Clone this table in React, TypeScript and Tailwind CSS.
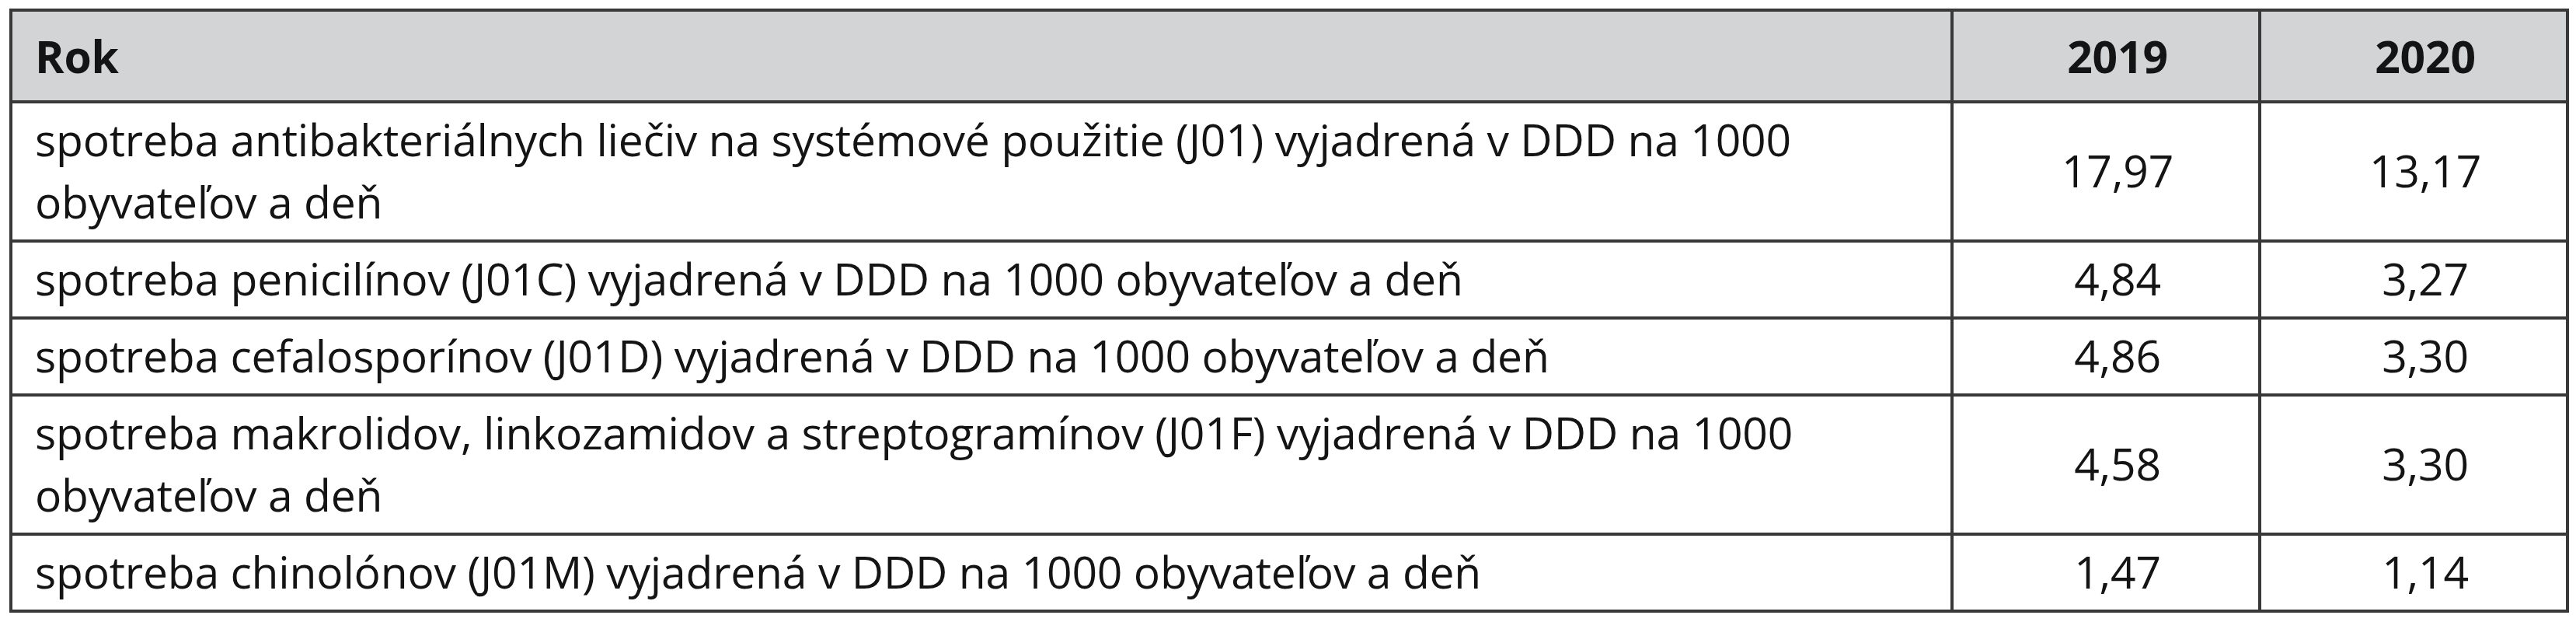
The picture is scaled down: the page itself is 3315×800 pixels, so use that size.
const rows = [
  {
    label: "spotreba antibakteriálnych liečiv na systémové použitie (J01) vyjadrená v DDD na 1000 obyvateľov a deň",
    y2019: "17,97",
    y2020: "13,17",
  },
  {
    label: "spotreba penicilínov (J01C) vyjadrená v DDD na 1000 obyvateľov a deň",
    y2019: "4,84",
    y2020: "3,27",
  },
  {
    label: "spotreba cefalosporínov (J01D) vyjadrená v DDD na 1000 obyvateľov a deň",
    y2019: "4,86",
    y2020: "3,30",
  },
  {
    label: "spotreba makrolidov, linkozamidov a streptogramínov (J01F) vyjadrená v DDD na 1000 obyvateľov a deň",
    y2019: "4,58",
    y2020: "3,30",
  },
  {
    label: "spotreba chinolónov (J01M) vyjadrená v DDD na 1000 obyvateľov a deň",
    y2019: "1,47",
    y2020: "1,14",
  },
];

export default function App() {
  return (
    <div className="min-h-[800px] w-[3315px] bg-white pl-[12px] pt-[11px] font-['Open_Sans',sans-serif] text-[57px] leading-[80px] tracking-[-0.2px] text-[#141414]">
      <table className="w-[3294px] table-fixed border-separate border-spacing-0 border-l-4 border-t-4 border-[#383838]">
        <colgroup>
          <col className="w-[2498px]" />
          <col className="w-[396px]" />
          <col className="w-[396px]" />
        </colgroup>
        <thead>
          <tr className="bg-[#d3d4d6]">
            <th className="border-b-4 border-r-4 border-[#383838] py-[17px] pl-[29px] text-left font-bold">Rok</th>
            <th className="border-b-4 border-r-4 border-[#383838] py-[17px] pl-[30px] text-center font-bold">2019</th>
            <th className="border-b-4 border-r-4 border-[#383838] py-[17px] pl-[30px] text-center font-bold">2020</th>
          </tr>
        </thead>
        <tbody>
          {rows.map((row) => (
            <tr key={row.label}>
              <td className="border-b-4 border-r-4 border-[#383838] pb-[9px] pl-[29px] pr-[120px] pt-[6px] align-top">
                {row.label}
              </td>
              <td className="border-b-4 border-r-4 border-[#383838] pb-[9px] pl-[30px] pt-[6px] text-center align-middle">
                {row.y2019}
              </td>
              <td className="border-b-4 border-r-4 border-[#383838] pb-[9px] pl-[30px] pt-[6px] text-center align-middle">
                {row.y2020}
              </td>
            </tr>
          ))}
        </tbody>
      </table>
    </div>
  );
}
